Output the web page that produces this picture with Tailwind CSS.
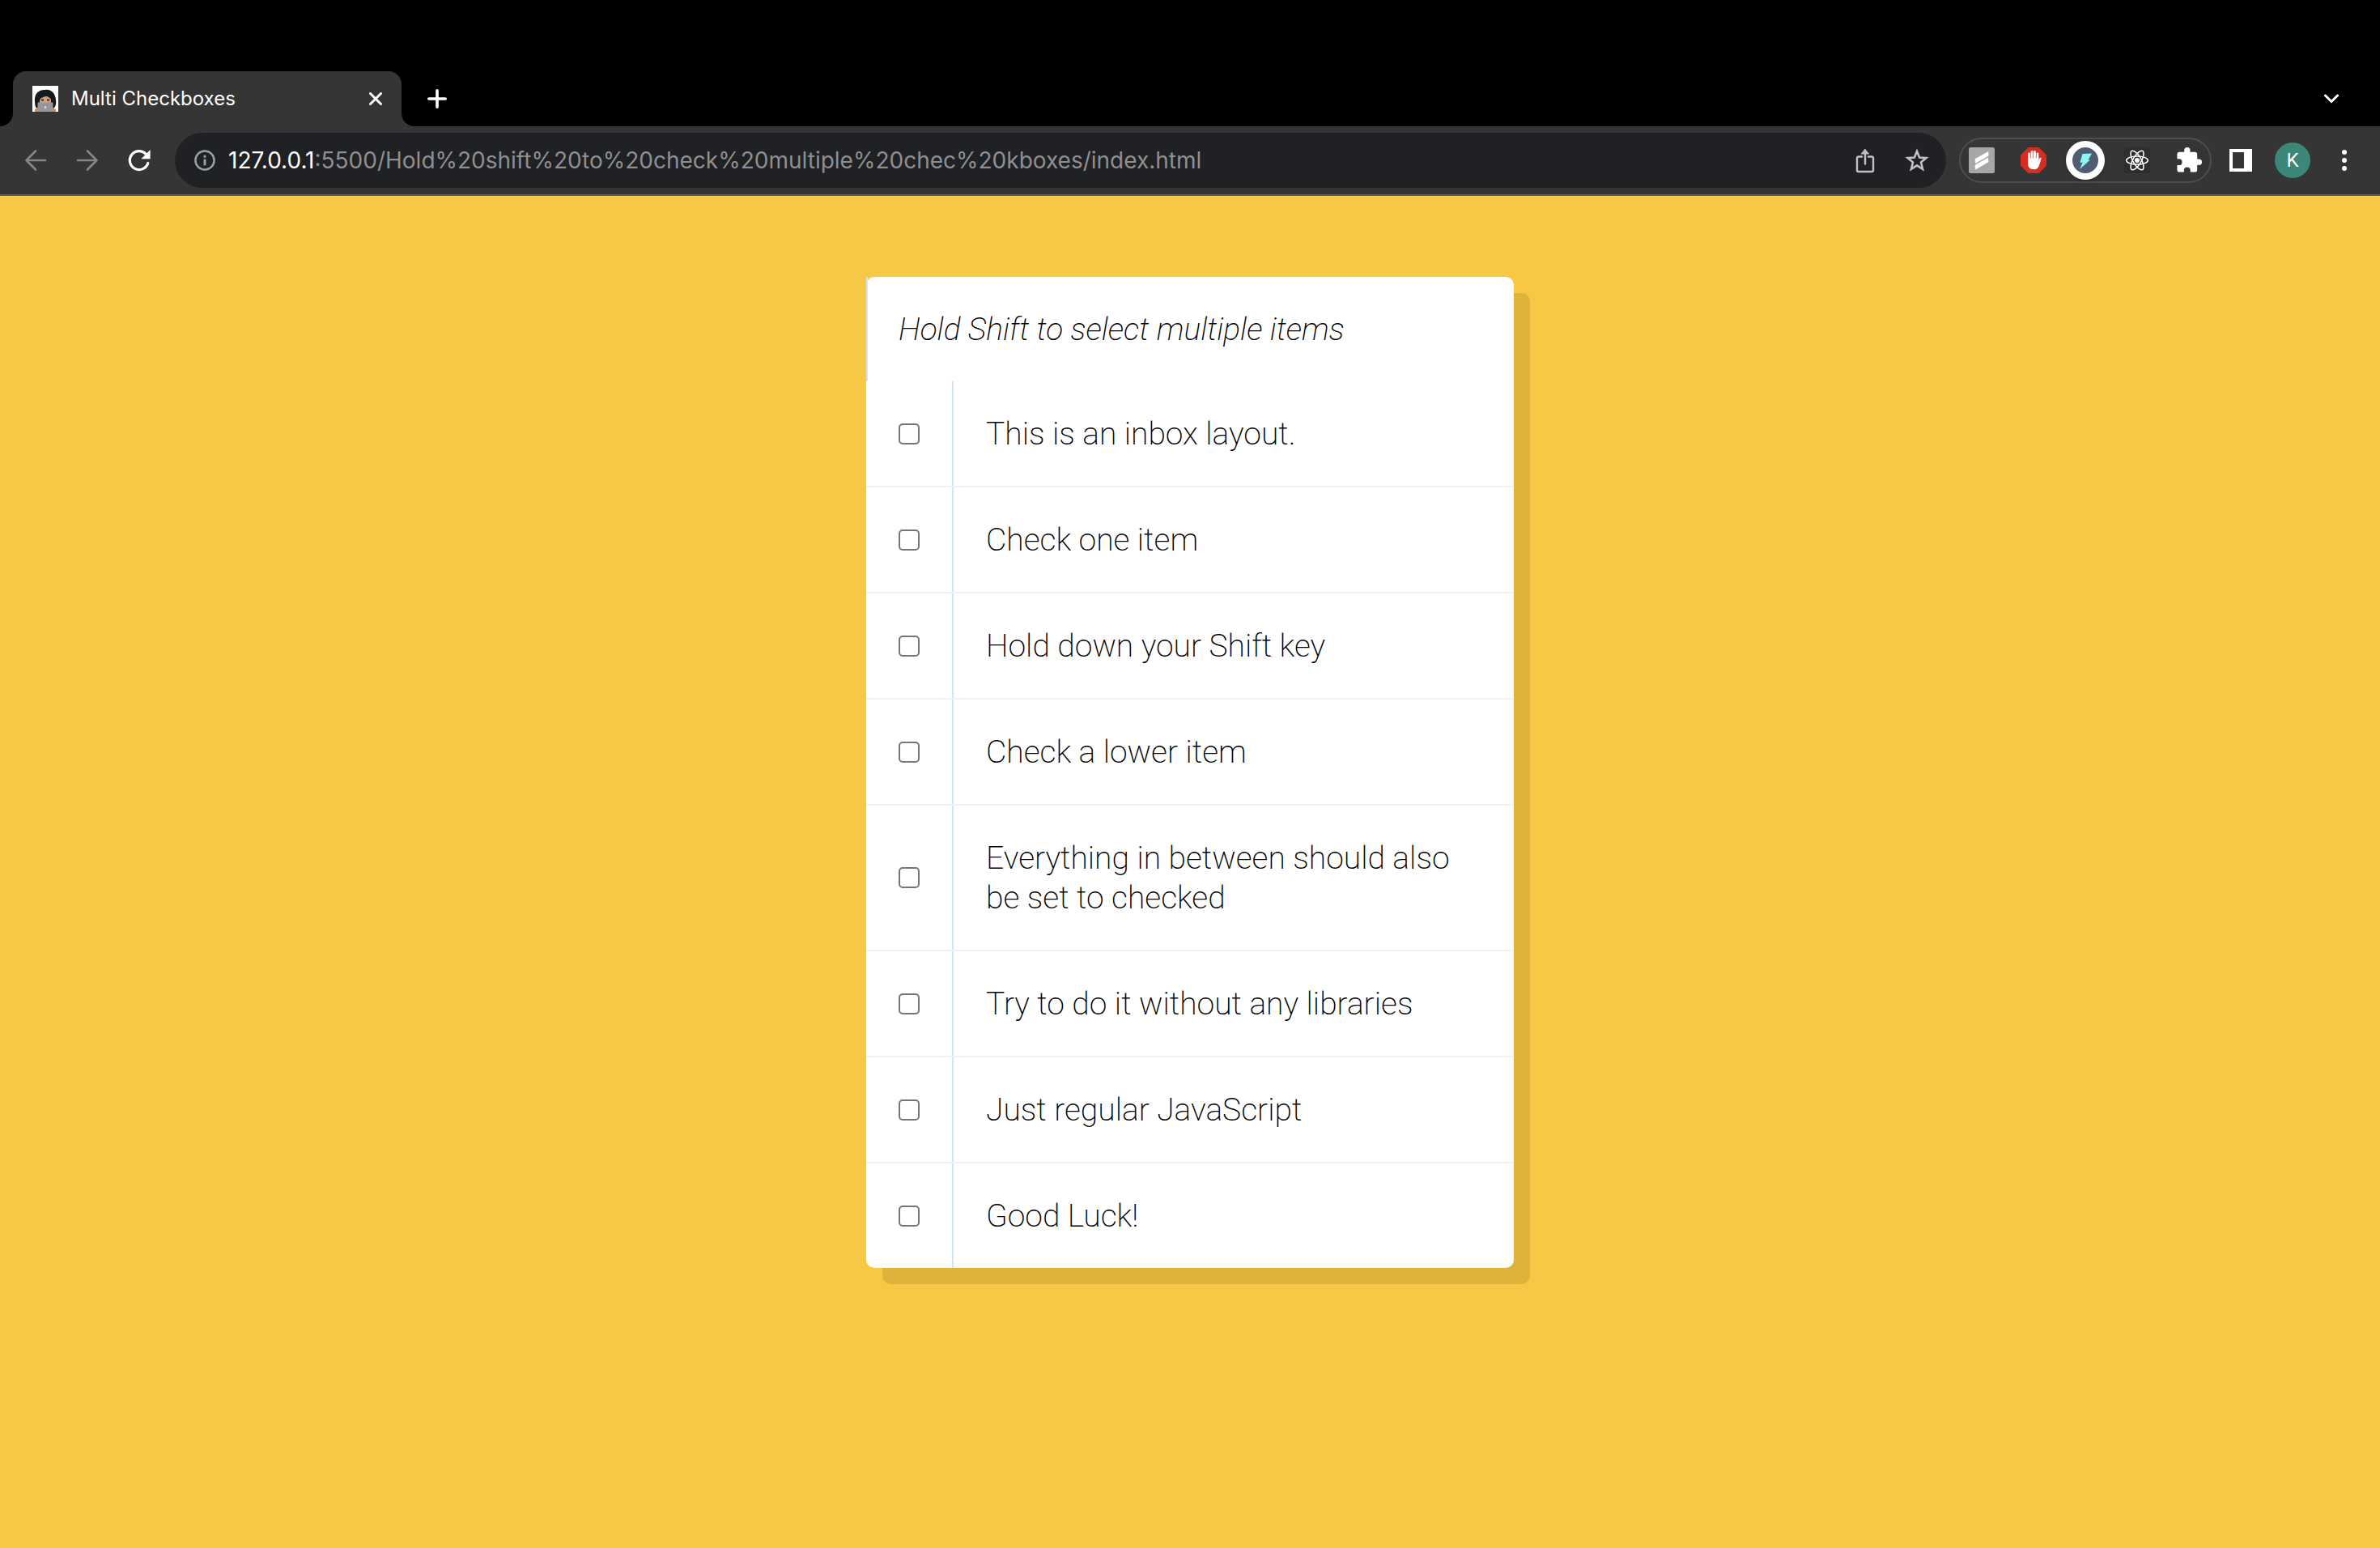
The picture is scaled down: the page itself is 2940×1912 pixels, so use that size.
<!DOCTYPE html>
<html lang="en">
<head>
<meta charset="utf-8">
<title>Multi Checkboxes</title>
<script src="https://cdn.jsdelivr.net/npm/@tailwindcss/browser@4"></script>
</head>
<body class="flex min-h-screen flex-col bg-[#f7c843] font-['Roboto',sans-serif]">

<!-- Browser chrome -->
<header>
  <!-- Tab strip -->
  <div class="flex items-end bg-black pt-[88px] pr-10 text-white">
    <svg class="size-4 text-[#353535]" viewBox="0 0 16 16" fill="currentColor"><path d="M16 0V16H0A16 16 0 0 0 16 0Z"/></svg>
    <div class="flex h-17 w-120 items-center gap-4 rounded-t-2xl bg-[#353535] px-6">
      <svg class="size-8" viewBox="0 0 32 32">
        <rect width="32" height="32" fill="#fff"/>
        <path d="M3 19C2 10 8 4.500 15.500 5C23 4 28 9 29 17C30 23 28 28 25 28H7C4 28 3 24 3 19Z" fill="#15191c"/>
        <path d="M9 17C9 13 13 12.500 17 12C21 12.500 23 14 23 18V22H9Z" fill="#d0a080"/>
        <path d="M8 18C8.500 12 13 9 17 10.500C20 11 23 13 24 18C22 15 20 13.500 17 12.800C14 14 10 14.500 9 18Z" fill="#15191c"/>
        <path d="M11 17.500h3M18 17.500h3" stroke="#3a261e" stroke-width="2"/>
        <path d="M3 32V29L7 27V32ZM29 32V29L25 27V32Z" fill="#e08a35"/>
        <rect x="6.500" y="20.500" width="19" height="11.500" rx="1" fill="#96969e"/>
        <circle cx="16" cy="26.500" r="1.300" fill="#e9e9ec"/>
      </svg>
      <span class="flex-1 font-['Inter',sans-serif] text-2xl">Multi Checkboxes</span>
      <button aria-label="Close tab"><svg class="size-4" viewBox="0 0 16 16" stroke="currentColor" stroke-width="3" stroke-linecap="round"><path d="M1.500 1.500L14.500 14.500M14.500 1.500L1.500 14.500"/></svg></button>
    </div>
    <svg class="size-4 text-[#353535]" viewBox="0 0 16 16" fill="currentColor"><path d="M0 0V16H16A16 16 0 0 1 0 0Z"/></svg>
    <button class="ml-4 flex h-17 items-center" aria-label="New tab"><svg class="size-6" viewBox="0 0 24 24" stroke="currentColor" stroke-width="3.600" stroke-linecap="round"><path d="M12 1.800V22.200M1.800 12H22.200"/></svg></button>
    <button class="ml-auto flex h-17 items-center px-2.5" aria-label="Search tabs"><svg class="h-3 w-5" viewBox="0 0 20 12" fill="none" stroke="currentColor" stroke-width="3" stroke-linecap="round"><path d="M2.500 2L10 9.500L17.500 2"/></svg></button>
  </div>

  <!-- Toolbar -->
  <div class="flex h-[86px] items-center border-b-2 border-[#5f5f61] bg-[#353535] px-7 text-white">
    <nav class="mr-7 flex gap-8">
      <button class="text-[#868686]" aria-label="Back"><svg class="size-8" viewBox="0 0 32 32" fill="none" stroke="currentColor" stroke-width="2.600" stroke-linecap="round" stroke-linejoin="round"><path d="M28 16H4.500M16 4.500L4.500 16L16 27.500"/></svg></button>
      <button class="text-[#868686]" aria-label="Forward"><svg class="size-8" viewBox="0 0 32 32" fill="none" stroke="currentColor" stroke-width="2.600" stroke-linecap="round" stroke-linejoin="round"><path d="M4 16H27.500M16 4.500L27.500 16L16 27.500"/></svg></button>
      <button aria-label="Reload"><svg class="size-8" viewBox="0 0 32 32"><path d="M26.800 19.500A11.500 11.500 0 1 1 23.800 7.800" fill="none" stroke="currentColor" stroke-width="3.200" stroke-linecap="round"/><path d="M29.600 3V14.200H18.400Z" fill="currentColor"/></svg></button>
    </nav>

    <div class="mr-4 flex h-17 flex-1 items-center rounded-full bg-[#202124] pr-5 pl-6">
      <button class="text-[#9aa0a6]" aria-label="View site information"><svg class="size-[26px]" viewBox="0 0 27 27"><circle cx="13.500" cy="13.500" r="12" fill="none" stroke="currentColor" stroke-width="2.600"/><path d="M12 12H15V20H12ZM12 7H15V10H12Z" fill="currentColor"/></svg></button>
      <div class="ml-4 flex-1 font-['Inter',sans-serif] text-[28px] whitespace-nowrap text-[#8f8f91] outline-none" role="textbox" aria-label="Address" contenteditable="true" spellcheck="false"><span class="text-white">127.0.0.1</span>:5500/Hold%20shift%20to%20check%20multiple%20chec%20kboxes/index.html</div>
      <div class="flex gap-8 text-[#c0c0c1]">
        <button aria-label="Share"><svg class="size-8" viewBox="0 0 32 32" fill="none" stroke="currentColor" stroke-width="2.400" stroke-linecap="round" stroke-linejoin="round"><path d="M12 11.500H8A2 2 0 0 0 6 13.500V28A2 2 0 0 0 8 30H24A2 2 0 0 0 26 28V13.500A2 2 0 0 0 24 11.500H20M16 20.500V4"/><path d="M16 2.500L20.500 8H11.500Z" fill="currentColor" stroke-width="1"/></svg></button>
        <button aria-label="Bookmark this page"><svg class="size-8" viewBox="0 0 32 32" fill="none" stroke="currentColor" stroke-width="2.600"><path d="M16 4.800L19.100 12.500L27.400 13.100L21 18.500L23.100 26.900L16 22.400L8.900 26.900L11 18.500L4.600 13.100L12.900 12.500Z"/></svg></button>
      </div>
    </div>

    <div class="flex h-14 items-center gap-8 rounded-full border-2 border-[#4e4e4e] px-2.5">
      <button aria-label="Scrimba extension"><svg class="size-8" viewBox="0 0 32 32"><rect width="32" height="32" rx="2.500" fill="#a7a7a7"/><path d="M8 14.500L24 5.500V10.500L8.500 19.300ZM8 22L23.500 13.200L24 18L8.500 27Z" fill="#fff" stroke="#fff" stroke-width=".8" stroke-linejoin="round"/></svg></button>
      <button aria-label="Ad blocker"><svg class="size-8" viewBox="0 0 32 32"><path d="M9.500 0H22.500L32 9.500V22.500L22.500 32H9.500L0 22.500V9.500Z" fill="#d52d22"/><path d="M10.500 16V8M14 15V5.500M17.500 15V5.500M21 16V8" stroke="#fff" stroke-width="2.800" stroke-linecap="round"/><path d="M9.100 13.500H22.400V17L23.500 13.500C24 12.200 26 12.600 25.600 14L23 22C22 25.500 20 27.200 16.500 27.200C12 27.200 9.100 24.500 9.100 20.500Z" fill="#fff"/></svg></button>
      <button class="-m-2 flex size-12 items-center justify-center rounded-full bg-white shadow-md" aria-label="Lightning extension"><svg class="size-8" viewBox="0 0 32 32"><circle cx="16" cy="16" r="16" fill="#515c73"/><path d="M12.500 8L24 7.500L19.500 15.500H22L9 27L12.800 18.800H9.500Z" fill="#8cfaf4"/></svg></button>
      <button aria-label="React Developer Tools"><svg class="size-8" viewBox="0 0 32 32"><rect width="32" height="32" rx="2" fill="#2e2e2e"/><g fill="none" stroke="#fff" stroke-width="1.500"><ellipse cx="16" cy="16" rx="13.300" ry="5.100"/><ellipse cx="16" cy="16" rx="13.300" ry="5.100" transform="rotate(60 16 16)"/><ellipse cx="16" cy="16" rx="13.300" ry="5.100" transform="rotate(120 16 16)"/></g><circle cx="16" cy="16" r="3" fill="#fff"/></svg></button>
      <button aria-label="Extensions"><svg class="size-8" viewBox="1 1 22 22" fill="currentColor"><path d="M20.500 11H19V7a2 2 0 0 0-2-2h-4V3.500a2.500 2.500 0 0 0-5 0V5H4a2 2 0 0 0-2 2v3.800h1.500a2.700 2.700 0 0 1 0 5.400H2V20a2 2 0 0 0 2 2h3.800v-1.500a2.700 2.700 0 0 1 5.400 0V22H17a2 2 0 0 0 2-2v-4h1.500a2.500 2.500 0 0 0 0-5z"/></svg></button>
    </div>

    <div class="ml-5 flex items-center gap-[26px]">
      <button aria-label="Side panel"><svg class="size-8" viewBox="0 0 32 32"><path d="M2 2H30V30H2ZM6 6V26H20V6Z" fill="currentColor" fill-rule="evenodd"/></svg></button>
      <button class="flex size-11 items-center justify-center rounded-full bg-[#3b877a] text-2xl" aria-label="Profile">K</button>
      <button aria-label="Menu"><svg class="size-8" viewBox="0 0 32 32" fill="currentColor"><circle cx="16" cy="6" r="3"/><circle cx="16" cy="16" r="3"/><circle cx="16" cy="26" r="3"/></svg></button>
    </div>
  </div>
</header>

<!-- Page -->
<main class="mx-auto my-[100px] w-full max-w-[800px] rounded-[10px] bg-white text-[39px] leading-[49px] font-extralight text-black shadow-[20px_20px_0_rgba(0,0,0,0.1)]">
  <h1 class="border-l-2 border-[#d1e2ff] pt-[41px] pb-[39px] pl-[38px] italic">Hold Shift to select multiple items</h1>
  <div class="flex items-center border-b-2 border-[#f1f1f1]">
    <input id="item1" type="checkbox" class="mx-10 size-[26px] appearance-none rounded-[5px] border-2 border-[#767676] bg-white checked:bg-[#0075ff]">
    <label for="item1" class="flex-1 border-l-2 border-[#d1e2ff] px-10 pt-[41px] pb-[39px]">This is an inbox layout.</label>
  </div>
  <div class="flex items-center border-b-2 border-[#f1f1f1]">
    <input id="item2" type="checkbox" class="mx-10 size-[26px] appearance-none rounded-[5px] border-2 border-[#767676] bg-white checked:bg-[#0075ff]">
    <label for="item2" class="flex-1 border-l-2 border-[#d1e2ff] px-10 pt-[41px] pb-[39px]">Check one item</label>
  </div>
  <div class="flex items-center border-b-2 border-[#f1f1f1]">
    <input id="item3" type="checkbox" class="mx-10 size-[26px] appearance-none rounded-[5px] border-2 border-[#767676] bg-white checked:bg-[#0075ff]">
    <label for="item3" class="flex-1 border-l-2 border-[#d1e2ff] px-10 pt-[41px] pb-[39px]">Hold down your Shift key</label>
  </div>
  <div class="flex items-center border-b-2 border-[#f1f1f1]">
    <input id="item4" type="checkbox" class="mx-10 size-[26px] appearance-none rounded-[5px] border-2 border-[#767676] bg-white checked:bg-[#0075ff]">
    <label for="item4" class="flex-1 border-l-2 border-[#d1e2ff] px-10 pt-[41px] pb-[39px]">Check a lower item</label>
  </div>
  <div class="flex items-center border-b-2 border-[#f1f1f1]">
    <input id="item5" type="checkbox" class="mx-10 size-[26px] appearance-none rounded-[5px] border-2 border-[#767676] bg-white checked:bg-[#0075ff]">
    <label for="item5" class="flex-1 border-l-2 border-[#d1e2ff] px-10 pt-[41px] pb-[39px]">Everything in between should also be set to checked</label>
  </div>
  <div class="flex items-center border-b-2 border-[#f1f1f1]">
    <input id="item6" type="checkbox" class="mx-10 size-[26px] appearance-none rounded-[5px] border-2 border-[#767676] bg-white checked:bg-[#0075ff]">
    <label for="item6" class="flex-1 border-l-2 border-[#d1e2ff] px-10 pt-[41px] pb-[39px]">Try to do it without any libraries</label>
  </div>
  <div class="flex items-center border-b-2 border-[#f1f1f1]">
    <input id="item7" type="checkbox" class="mx-10 size-[26px] appearance-none rounded-[5px] border-2 border-[#767676] bg-white checked:bg-[#0075ff]">
    <label for="item7" class="flex-1 border-l-2 border-[#d1e2ff] px-10 pt-[41px] pb-[39px]">Just regular JavaScript</label>
  </div>
  <div class="flex items-center">
    <input id="item8" type="checkbox" class="mx-10 size-[26px] appearance-none rounded-[5px] border-2 border-[#767676] bg-white checked:bg-[#0075ff]">
    <label for="item8" class="flex-1 border-l-2 border-[#d1e2ff] px-10 pt-[41px] pb-[39px]">Good Luck!</label>
  </div>
</main>
</body>
</html>
